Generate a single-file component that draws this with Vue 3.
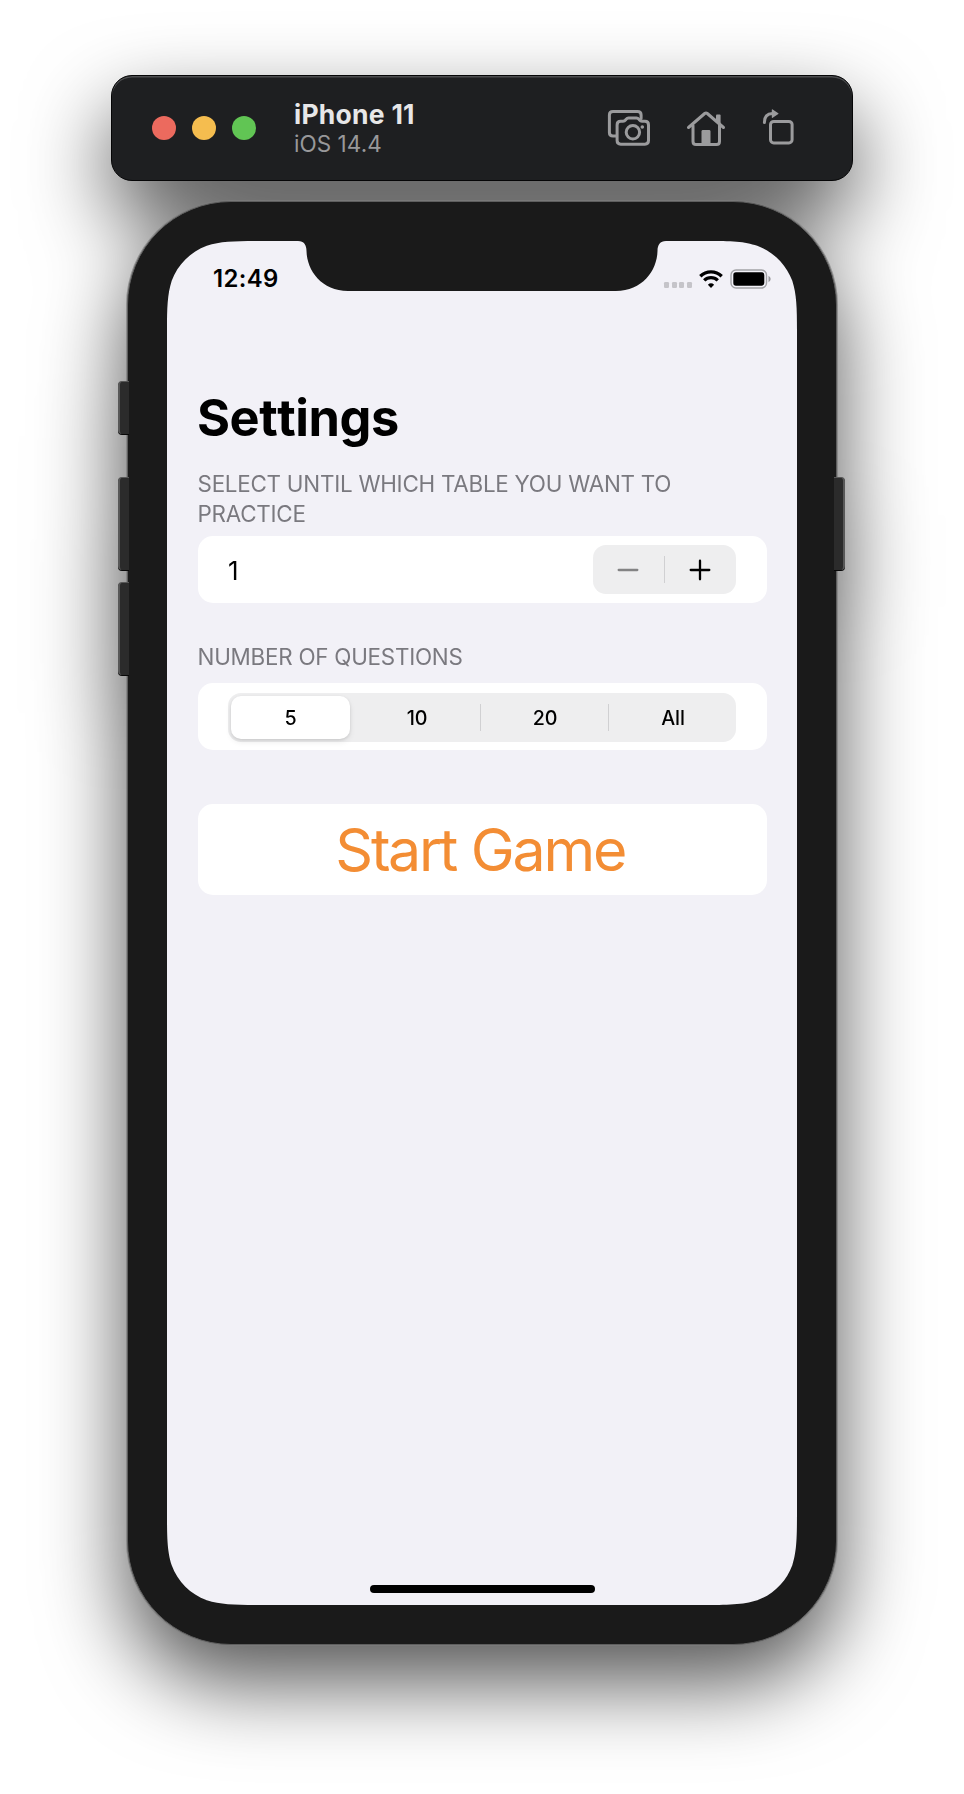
<script setup>
import { ref } from 'vue'

const table = ref(1)
const choices = ['5', '10', '20', 'All']
const selected = ref('5')
</script>

<template>
  <main class="desktop">
    <div class="simulator">
      <header class="toolbar">
        <div class="lights">
          <i class="light close"></i>
          <i class="light minimise"></i>
          <i class="light expand"></i>
        </div>
        <div class="device">
          <strong>iPhone 11</strong>
          <span>iOS 14.4</span>
        </div>
        <nav class="actions">
          <svg class="shot" viewBox="0 0 42 36" width="42" height="36">
            <path d="M8.500 26H5Q1.400 26 1.400 22.400V5Q1.400 1.400 5 1.400H29.500Q33.100 1.400 33.100 5V8.500" />
            <path d="M12.700 11.300H15Q16.600 11.300 17.400 10.200L18.200 9.100Q19.100 8 20.500 8H28.500Q29.900 8 30.800 9.100L31.600 10.200Q32.400 11.300 34 11.300H36.900Q40.500 11.300 40.500 14.900V30.600Q40.500 34.200 36.900 34.200H12.700Q9.100 34.200 9.100 30.600V14.900Q9.100 11.300 12.700 11.300Z" />
            <circle cx="24.900" cy="22.300" r="6.700" />
            <circle cx="34.300" cy="17" r="1.800" class="solid" />
          </svg>
          <svg class="home" viewBox="0 0 38 35" width="38" height="35">
            <path d="M1.500 16.500L17.700 2.500Q19 1.400 20.300 2.500L36.500 16.500" />
            <path d="M6 14.500V30.400Q6 33.400 9 33.400H29.500Q32.500 33.400 32.500 30.400V14.500" />
            <path d="M29 11V4.600Q29 3.600 30 3.600H32.600Q33.600 3.600 33.600 4.600V15Z" class="solid" />
            <path d="M14.500 34V20.400Q14.500 19 15.900 19H22.100Q23.500 19 23.500 20.400V34Z" class="solid" />
          </svg>
          <svg class="rotate" viewBox="0 0 31 36" width="31" height="36">
            <rect x="7.500" y="12.400" width="21.600" height="21.600" rx="3.200" />
            <path d="M1.400 13.600Q1.400 4.600 9.500 4.600" />
            <path d="M8.800 0.900Q8.800 -0.100 9.700 0.500L15.300 4.200Q15.900 4.600 15.300 5L9.700 8.700Q8.800 9.300 8.800 8.300Z" class="solid" />
          </svg>
        </nav>
      </header>

      <section class="phone">
        <i class="key mute"></i>
        <i class="key volume-up"></i>
        <i class="key volume-down"></i>
        <i class="key power"></i>

        <div class="screen">
          <div class="status">
            <time>12:49</time>
            <div class="indicators">
              <span class="signal"><i></i><i></i><i></i><i></i></span>
              <svg class="wifi" viewBox="0 0 24 18" width="24" height="18">
                <path d="M1.300 6.300a15.300 15.300 0 0 1 21.400 0" />
                <path d="M5.200 10.400a9.800 9.800 0 0 1 13.600 0" />
                <path d="M12 17.900 8.900 14.700a4.500 4.500 0 0 1 6.200 0z" class="dot" />
              </svg>
              <svg class="battery" viewBox="0 0 41 20" width="41" height="20">
                <rect x="1" y="1" width="35.500" height="18" rx="5" class="shell" />
                <rect x="3.300" y="3.300" width="31" height="13.400" rx="2.600" />
                <path d="M38.500 6.800q2.200 1.200 2.200 3.200t-2.200 3.200z" class="cap" />
              </svg>
            </div>
          </div>

          <h1>Settings</h1>

          <h2 class="first">SELECT UNTIL WHICH TABLE YOU WANT TO PRACTICE</h2>
          <div class="card row">
            <span class="value">{{ table }}</span>
            <div class="stepper">
              <button class="minus" :disabled="table === 1" @click="table--">
                <svg viewBox="0 0 22 22" width="22" height="22"><path d="M1.700 11h18.600" /></svg>
              </button>
              <i class="rule"></i>
              <button class="plus" @click="table++">
                <svg viewBox="0 0 22 22" width="22" height="22"><path d="M1.700 11h18.600M11 1.700v18.600" /></svg>
              </button>
            </div>
          </div>

          <h2 class="second">NUMBER OF QUESTIONS</h2>
          <div class="card row">
            <div class="segments">
              <button
                v-for="choice in choices"
                :key="choice"
                class="segment"
                :class="{ on: choice === selected }"
                @click="selected = choice"
              >{{ choice }}</button>
            </div>
          </div>

          <button class="card start">Start Game</button>
          <i class="indicator"></i>
        </div>
      </section>
    </div>
  </main>
</template>

<style>
body {
  margin: 0;
  background: #fff;
}
</style>

<style scoped>
* {
  box-sizing: border-box;
}
button {
  border: 0;
  margin: 0;
  padding: 0;
  background: none;
  color: inherit;
  font: inherit;
}
svg {
  display: block;
  flex: none;
}
.desktop {
  height: 1794px;
  padding-top: 75px;
  overflow: hidden;
  background: #fff;
  font-family: Inter, "Liberation Sans", sans-serif;
}
.simulator {
  display: flex;
  flex-direction: column;
  align-items: center;
  gap: 20px;
  filter: drop-shadow(0 37px 42px rgba(0, 0, 0, 0.67));
}

/* Title bar */
.toolbar {
  display: flex;
  align-items: center;
  width: 742px;
  height: 106px;
  padding: 0 58.500px 0 40px;
  border: 1px solid #050506;
  border-radius: 21px;
  background: #1e1f21;
  box-shadow: inset 0 1.500px 0 #4c4d4f;
}
.lights {
  display: flex;
  gap: 16px;
}
.light {
  width: 24px;
  height: 24px;
  border-radius: 50%;
}
.close { background: #ec6a5e; }
.minimise { background: #f5bd4f; }
.expand { background: #61c554; }
.device {
  display: flex;
  flex-direction: column;
  margin-left: 38px;
  padding-top: 1px;
}
.device strong {
  color: #e7e7e8;
  font-size: 26.500px;
  font-weight: 700;
  line-height: 31px;
  letter-spacing: 0.250px;
}
.device span {
  color: #98989a;
  font-size: 22.500px;
  line-height: 28px;
  letter-spacing: 0.050px;
}
.actions {
  display: flex;
  align-items: center;
  gap: 37.500px;
  margin-left: auto;
}
.actions svg {
  overflow: visible;
  fill: none;
  stroke: #9b9b9d;
  stroke-width: 3;
  stroke-linecap: round;
  stroke-linejoin: round;
}
.actions .solid {
  fill: #9b9b9d;
  stroke: none;
}
.rotate {
  margin-top: -3px;
}

/* Handset */
.phone {
  position: relative;
  width: 710px;
  height: 1444px;
  padding: 39px;
  border: 1px solid #5e5e5e;
  border-radius: 104px;
  background: #1a1a1a;
  box-shadow: 0 0 0 1px rgba(125, 125, 125, 0.7);
}
.key {
  position: absolute;
  left: -10px;
  width: 11px;
  height: 93px;
  border: 1px solid #585858;
  border-width: 1px 0 0 2px;
  border-radius: 4px 0 0 4px;
  background: #2b2b2b;
  box-shadow: 0 1px 0 #080808;
}
.mute { top: 179px; height: 53px; }
.volume-up { top: 275px; }
.volume-down { top: 380px; }
.power {
  top: 275px;
  right: -9px;
  left: auto;
  border-width: 1px 2px 0 0;
  border-radius: 0 4px 4px 0;
}
.screen {
  display: flex;
  flex-direction: column;
  width: 630px;
  height: 1364px;
  padding: 0 30.500px 12px;
  background: #f2f1f7;
  color: #000;
  clip-path: path("M96.300 0H131C137 0 139.500 4 139.500 10C140 30 155 50 181 50H449C475 50 490 30 490.500 10C490.500 4 493 0 499 0H533.700C561.400 0 575.300 0 587.800 4.100L590.200 4.700C606.500 10.700 619.300 23.500 625.300 39.800C630 54.700 630 68.600 630 96.300V1267.700C630 1295.400 630 1309.300 625.300 1324.200C619.300 1340.500 606.500 1353.300 590.200 1359.300C575.300 1364 561.400 1364 533.700 1364H96.300C68.600 1364 54.700 1364 39.800 1359.300C23.500 1353.300 10.700 1340.500 4.700 1324.200C0 1309.300 0 1295.400 0 1267.700V96.300C0 68.600 0 54.700 4.700 39.800C10.700 23.500 23.500 10.700 39.800 4.700C54.700 0 68.600 0 96.300 0Z");
}
.status {
  display: flex;
  align-items: center;
  justify-content: space-between;
  height: 76px;
  margin-right: -4.500px;
  padding-left: 15.500px;
}
time {
  font-size: 23.900px;
  font-weight: 600;
  line-height: 24px;
  letter-spacing: 0.400px;
}
.indicators {
  display: flex;
  align-items: center;
}
.signal {
  display: flex;
  gap: 2.300px;
  margin: 11.500px 7px 0 0;
}
.signal i {
  width: 5.300px;
  height: 5.600px;
  border-radius: 1.300px;
  background: #c5c4c9;
}
.wifi {
  margin-right: 7px;
  fill: none;
  stroke: #000;
  stroke-width: 3.300;
}
.wifi .dot {
  fill: #000;
  stroke: none;
}
.battery .shell {
  fill: none;
  stroke: #a3a3a7;
  stroke-width: 1.400;
}
.battery .cap {
  fill: #98989c;
}
h1 {
  margin: 70.500px 0 0;
  font-size: 50.500px;
  font-kerning: none;
  font-weight: 700;
  line-height: 60px;
  letter-spacing: -0.450px;
  text-indent: -0.500px;
}
h2 {
  margin: 0;
  color: #7a797f;
  font-size: 22.400px;
  font-weight: 400;
  line-height: 30.500px;
  letter-spacing: -0.240px;
}
.first { margin: 21px 0 6.500px; }
.second { margin: 38.800px 0 10.800px; }
.card {
  flex: none;
  border-radius: 15px;
  background: #fff;
}
.row {
  display: flex;
  align-items: center;
  justify-content: space-between;
  height: 67px;
  padding: 0 30.500px;
}
.value {
  padding-top: 1px;
  font-size: 26px;
}
.stepper {
  display: flex;
  align-items: center;
  width: 143px;
  height: 49px;
  border-radius: 13px;
  background: #eeeeef;
}
.stepper button {
  display: flex;
  flex: 1;
  justify-content: center;
}
.stepper .plus {
  padding-right: 1px;
}
.stepper path {
  fill: none;
  stroke: #000;
  stroke-width: 2.300;
  stroke-linecap: round;
}
.stepper .minus path {
  stroke: #838384;
}
.rule {
  width: 1px;
  height: 27px;
  background: #d0d0d2;
}
.segments {
  display: flex;
  width: 100%;
  height: 49px;
  margin-top: 2px;
  border-radius: 13px;
  background: #eeeeef;
}
.segment {
  position: relative;
  flex: 1;
  font-size: 19.700px;
  font-weight: 500;
  letter-spacing: -0.200px;
}
.segment:nth-child(2),
.segment:nth-child(3) {
  padding-right: 2px;
}
.segment.on {
  flex: 0 0 119px;
  margin: 3px 4px 3px 3px;
  border-radius: 10px;
  background: #fff;
  box-shadow: 0 3px 6px rgba(0, 0, 0, 0.08), 0 1px 3px rgba(0, 0, 0, 0.1);
}
.segment:nth-child(n + 3)::before {
  content: "";
  position: absolute;
  top: 11px;
  left: -2px;
  width: 1px;
  height: 27px;
  background: #d0d0d2;
}
.start {
  height: 91.500px;
  margin-top: 53.700px;
  padding-right: 3.500px;
  color: #f38d34;
  font-size: 59px;
  font-kerning: none;
  line-height: 91px;
  letter-spacing: -2.150px;
}
.indicator {
  width: 225px;
  height: 8px;
  margin: auto auto 0;
  border-radius: 4px;
  background: #000;
}
</style>
